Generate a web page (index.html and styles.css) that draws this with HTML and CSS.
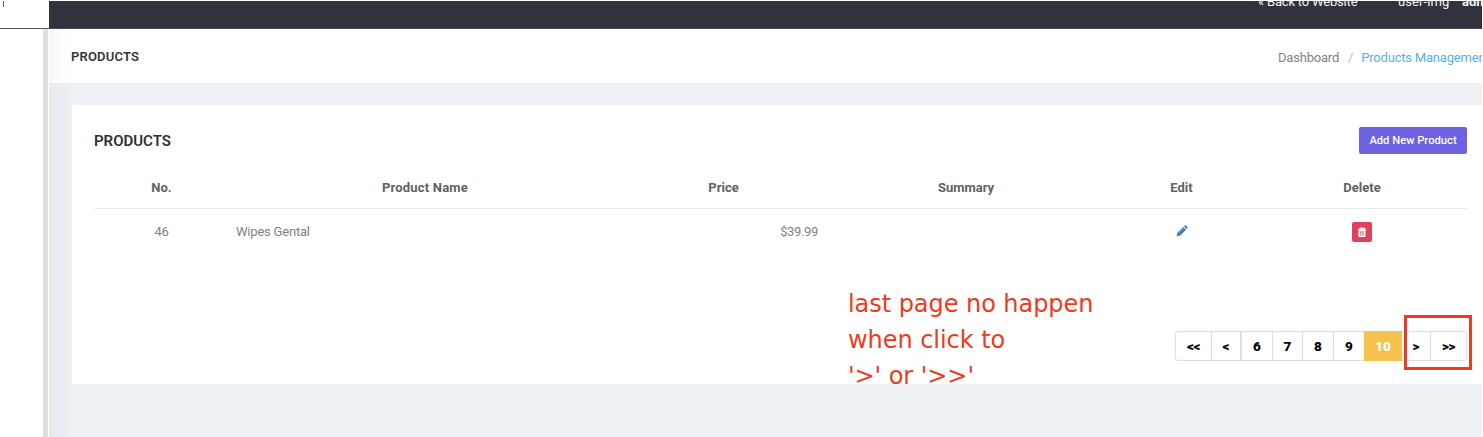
FILE: index.html
```html
<!DOCTYPE html>
<html lang="en">
<head>
<meta charset="utf-8">
<title>Products</title>
<link rel="stylesheet" href="styles.css">
</head>
<body>
<div class="app">
  <aside class="sidebar">
    <div class="brand"><span class="brand-mark"></span></div>
    <div class="sidebar-body"></div>
  </aside>
  <main class="main">
    <header class="topbar">
      <span class="back">« Back to Website</span>
      <span class="user-img">user-img</span>
      <b class="user-name">admin</b>
    </header>
    <div class="content">
      <div class="titlebar">
        <h1 class="page-title"><span>PRODUCTS</span></h1>
        <nav class="crumbs"><span class="crumb-home">Dashboard</span><span class="slash">/</span><span class="crumb-here">Products Management</span></nav>
      </div>
      <section class="card">
        <div class="card-head">
          <h2 class="card-title"><span>PRODUCTS</span></h2>
          <button class="add"><span>Add New Product</span></button>
        </div>
        <div class="row head">
          <div>No.</div><div class="h-name">Product Name</div><div>Price</div><div>Summary</div><div>Edit</div><div>Delete</div>
        </div>
        <div class="row body">
          <div>46</div>
          <div class="left">Wipes Gental</div>
          <div class="right">$39.99</div>
          <div></div>
          <div><svg class="pencil" viewBox="0 0 12 12"><path d="M.5 11.500 1.200 8 7.300 1.900l2.800 2.800L4 10.800zM8 1.200 8.800.5q.7-.5 1.300.1l1.300 1.300q.6.7.1 1.300l-.7.8z" fill="#3d74b8"/><path d="M2.600 8.500 7.500 3.700" stroke="#a9c6e8" stroke-width=".7"/><path d="m1.300 9.600 1.100 1.100" stroke="#fff" stroke-width=".8"/></svg></div>
          <div><span class="trash"><svg viewBox="0 0 10 11"><path d="M1 2.400h8M3.300 2.200V1h3.400v1.200" fill="none" stroke="#fff" stroke-width="1.200"/><path d="M1.500 2.500h7V10H1.500z" fill="#fff"/><path d="M3.700 4v4.600M5 4v4.600M6.300 4v4.600" stroke="#e3405b" stroke-width=".7"/></svg></span></div>
        </div>
        <div class="pager">
          <span class="pg first">&lt;&lt;</span>
          <span class="pg prev">&lt;</span>
          <span class="pg p6">6</span><span class="pg p7">7</span><span class="pg p8">8</span><span class="pg p9">9</span>
          <span class="pg active">10</span>
          <span class="pg next">&gt;</span>
          <span class="pg last">&gt;&gt;</span>
        </div>
      </section>
    </div>
  </main>
  <div class="note">last page no happen<br>when click to<br>'&gt;' or '&gt;&gt;'</div>
  <div class="mark"></div>
</div>
</body>
</html>
```
FILE: styles.css
```css
* { box-sizing: border-box; }
body { margin: 0; background: #fff; font-family: Roboto, "Liberation Sans", sans-serif; font-size: 13px; color: #828282; overflow: hidden; }
.app { position: relative; display: flex; width: 1482px; height: 437px; padding-top: 1px; overflow: hidden; }
.sidebar { width: 49px; flex: none; display: flex; flex-direction: column; }
.brand { height: 28px; border-bottom: 1px solid #5b5862; padding-left: 3px; }
.brand-mark { display: block; width: 1px; height: 6px; background: #666; }
.sidebar-body { flex: 1; width: 48px; border-right: 5px solid #dfdfdf; }
.main { flex: 1; min-width: 0; display: flex; flex-direction: column; }
.topbar { height: 28px; flex: none; background: #30323e; border-bottom: 1px solid #484955; color: #f4f4f6; overflow: hidden; display: flex; white-space: nowrap; padding-left: 1209px; line-height: 16px; }
.topbar span, .topbar b { margin-top: -7px; flex: none; }
.back { width: 140px; letter-spacing: -.18px; }
.user-img { width: 64px; letter-spacing: .1px; }
.content { flex: 1; background: linear-gradient(90deg, #e6eaef, #edf0f5 20px); }
.titlebar { height: 54px; display: flex; justify-content: space-between; padding-left: 22px; background: linear-gradient(90deg, #f7f7f7, #fff 20px); line-height: 56px; white-space: nowrap; overflow: hidden; }
.page-title { margin: 0; font-size: 13px; font-weight: 600; color: #353535; line-height: 55px; letter-spacing: .18px; }
.crumbs { width: 204px; flex: none; letter-spacing: -.2px; padding-top: 1px; }
.slash { margin: 0 8px 0 9px; color: #b5b5b5; }
.crumb-here { color: #55aff3; }
.card { margin: 22px 0 0 23px; height: 279px; background: #fff; padding: 0 15px 0 22px; }
.card-head { display: flex; justify-content: space-between; height: 61px; }
.card-title { margin: 0; font-size: 15px; font-weight: 600; color: #303030; line-height: 72px; }
.add { width: 108px; height: 27px; margin: 22px 0 0; padding: 0 0 1px; background: #6e61e2; color: #fff; border: 0; border-radius: 2px; font: 500 11.200px Roboto, sans-serif; white-space: nowrap; }
.row { display: grid; grid-template-columns: 135px 392px 205px 280px 151px 1fr; text-align: center; }
.head { height: 43px; line-height: 43px; color: #626262; font-weight: 700; border-bottom: 1px solid #e9e9e9; }
.h-name { letter-spacing: .2px; }
.body { height: 44px; line-height: 45px; letter-spacing: -.2px; }
.left { text-align: left; padding-left: 7px; }
.right { text-align: right; padding-right: 8px; letter-spacing: -.35px; }
.pencil { width: 12px; height: 12px; vertical-align: middle; margin-top: -4px; }
.trash { display: inline-flex; width: 20px; height: 20px; border-radius: 2px; background: #e3405b; align-items: center; justify-content: center; vertical-align: middle; margin-top: -1px; }
.trash svg { width: 10px; height: 11px; }
.pager { display: flex; width: 292px; height: 30px; margin: 78px 0 0 auto; border: 1px solid #dedede; border-radius: 3px; color: #050505; font-size: 13.500px; font-weight: 900; }
.pg { display: flex; align-items: center; justify-content: center; border-right: 1px solid #dedede; }
.first { width: 36px; letter-spacing: -.5px; }
.prev { width: 30px; border-right-width: 2px; }
.p6 { width: 31px; }
.p7 { width: 30px; }
.p8 { width: 31px; }
.p9 { width: 30px; border-right: 0; }
.active { width: 38px; margin: -1px 0; background: #f7c14d; color: #fff; border: 0; }
.next { width: 29px; }
.last { flex: 1; border: 0; letter-spacing: -.5px; }
.note { position: absolute; left: 848px; top: 286px; color: #ed3a20; font: 24px/36px "DejaVu Sans", sans-serif; letter-spacing: -.05px; white-space: nowrap; }
.mark { position: absolute; left: 1404px; top: 315px; width: 68px; height: 55px; border: 3px solid #ed3a20; }
```
